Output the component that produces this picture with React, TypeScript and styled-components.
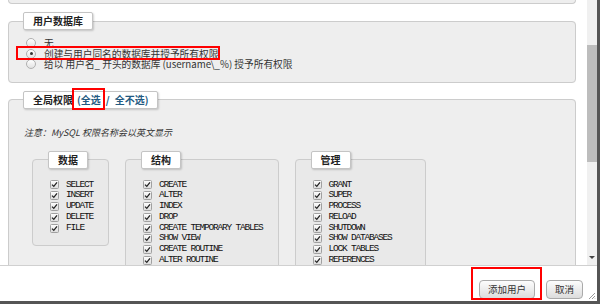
import React from 'react';
import styled, { createGlobalStyle } from 'styled-components';

const GlobalStyle = createGlobalStyle`
    html, body {
        margin: 0;
        padding: 0;
        background: #fff;
    }
    body {
        font-family: "Noto Sans CJK SC", "Liberation Sans", sans-serif;
    }
`;

const Window = styled.div`
    position: relative;
    width: 600px;
    height: 304px;
    box-sizing: border-box;
    border-right: 3px solid #555;
    border-bottom: 3px solid #555;
    background: #fff;
    display: flex;
    flex-direction: column;
    overflow: hidden;
`;

const Body = styled.div`
    display: flex;
    height: 265px;
    flex-shrink: 0;
`;

const ScrollPane = styled.div`
    flex: 1;
    overflow: hidden;
    padding: 0 11px 0 8px;
`;

const PrevFieldset = styled.div`
    height: 3px;
    border: 1px solid #ccc;
    border-top: none;
    border-radius: 0 0 4px 4px;
    background: #eee;
`;

const Fieldset = styled.fieldset`
    margin: 8px 0 0;
    padding: 8px 12px 12px 17px;
    border: 1px solid #ccc;
    border-radius: 4px;
    background: #eee;
    min-width: 0;
`;

const Legend = styled.legend<{ $shift?: number }>`
    margin-left: ${p => p.$shift ?? -3}px;
    padding: 0 9px;
    line-height: 16px;
    font-size: 10px;
    font-weight: bold;
    color: #222;
    background: #fff;
    border: 1px solid #c4c4c4;
    border-radius: 2px;
    box-shadow: 1px 1px 2px rgba(0, 0, 0, 0.18);
    white-space: nowrap;
`;

const Link = styled.a<{ $gap?: number }>`
    margin-left: ${p => p.$gap ?? 0}px;
    color: #235a81;
    text-decoration: none;
`;

const RadioRow = styled.label`
    display: flex;
    align-items: center;
    gap: 8px;
    height: 10.5px;
    line-height: 10.5px;
    font-size: 9.7px;
    color: #333;
    white-space: nowrap;
`;

const Radio = styled.span<{ $checked?: boolean }>`
    position: relative;
    width: 8px;
    height: 8px;
    border: 1px solid #b0b0b0;
    border-radius: 50%;
    background: linear-gradient(#fff, #e2e2e2);
    flex-shrink: 0;

    &::after {
        content: '';
        display: ${p => (p.$checked ? 'block' : 'none')};
        position: absolute;
        left: 2.5px;
        top: 2.5px;
        width: 3px;
        height: 3px;
        border-radius: 50%;
        background: #333;
    }
`;

const Note = styled.div`
    margin: 10px 0 0 -2px;
    font-size: 9px;
    line-height: 12px;
    font-style: italic;
    color: #333;
`;

const Groups = styled.div`
    display: flex;
    align-items: flex-start;
    gap: 16px;
    margin-top: 12px;
    padding-left: 6px;
`;

const SubFieldset = styled(Fieldset)`
    margin: 0;
    padding: 11px 15px 12px 17px;
    background: #e9e9e9;
`;

const Item = styled.label`
    display: flex;
    align-items: center;
    gap: 7px;
    height: 10.8px;
    line-height: 10.8px;
    font-family: "Liberation Mono", monospace;
    font-size: 9.5px;
    letter-spacing: -1.2px;
    color: #111;
    white-space: nowrap;
`;

const Scrollbar = styled.div`
    width: 10px;
    background: #f0f0f0;
    display: flex;
    flex-direction: column;
    align-items: center;
`;

const Thumb = styled.div`
    margin-top: 45px;
    width: 10px;
    height: 117px;
    background: #bdbdbd;
`;

const ArrowDown = styled.div`
    margin-top: auto;
    margin-bottom: 6px;
    width: 0;
    height: 0;
    border-left: 3px solid transparent;
    border-right: 3px solid transparent;
    border-top: 3px solid #444;
`;

const ButtonPane = styled.div`
    position: relative;
    flex: 1;
    border-top: 1px solid #d0d0d0;
    display: flex;
    justify-content: flex-end;
    align-items: flex-start;
    gap: 11px;
    padding: 14px 14px 0 0;
`;

const Button = styled.button`
    height: 19px;
    padding: 0 8px;
    font-family: "Noto Sans CJK SC", sans-serif;
    font-size: 9.5px;
    line-height: 17px;
    color: #333;
    background: linear-gradient(#fdfdfd, #dcdcdc);
    border: 1px solid #aaa;
    border-radius: 4px;
`;

const Grip = styled.svg`
    position: absolute;
    right: 1px;
    bottom: 1px;
`;

const Mark = styled.div<{ $x: number; $y: number; $w: number; $h: number }>`
    position: absolute;
    left: ${p => p.$x}px;
    top: ${p => p.$y}px;
    width: ${p => p.$w}px;
    height: ${p => p.$h}px;
    box-sizing: border-box;
    border: 2px solid #f00;
    pointer-events: none;
`;

function CheckIcon() {
    return (
        <svg width="9" height="9" viewBox="0 0 9 9" style={{ flexShrink: 0 }}>
            <defs>
                <linearGradient id="cb" x1="0" y1="0" x2="0" y2="1">
                    <stop offset="0" stopColor="#fff" />
                    <stop offset="1" stopColor="#dcdcdc" />
                </linearGradient>
            </defs>
            <rect x="0.5" y="0.5" width="8" height="8" rx="1" fill="url(#cb)" stroke="#a0a0a0" />
            <path d="M2 4.6 L3.8 6.4 L7 2.4" fill="none" stroke="#222" strokeWidth="1.3" />
        </svg>
    );
}

const groups = [
    {
        title: '数据',
        items: ['SELECT', 'INSERT', 'UPDATE', 'DELETE', 'FILE'],
    },
    {
        title: '结构',
        items: [
            'CREATE', 'ALTER', 'INDEX', 'DROP', 'CREATE TEMPORARY TABLES', 'SHOW VIEW',
            'CREATE ROUTINE', 'ALTER ROUTINE', 'EXECUTE', 'CREATE VIEW', 'EVENT', 'TRIGGER',
        ],
    },
    {
        title: '管理',
        items: [
            'GRANT', 'SUPER', 'PROCESS', 'RELOAD', 'SHUTDOWN', 'SHOW DATABASES', 'LOCK TABLES',
            'REFERENCES', 'REPLICATION CLIENT', 'REPLICATION SLAVE', 'CREATE USER',
        ],
    },
];

export default function App() {
    return (
        <>
            <GlobalStyle />
            <Window>
                <Body>
                    <ScrollPane>
                        <PrevFieldset />

                        <Fieldset>
                            <Legend>用户数据库</Legend>
                            <RadioRow><Radio />无</RadioRow>
                            <RadioRow><Radio $checked />创建与用户同名的数据库并授予所有权限</RadioRow>
                            <RadioRow><Radio />给以 用户名_ 开头的数据库 (username\_%) 授予所有权限</RadioRow>
                        </Fieldset>

                        <Fieldset>
                            <Legend>
                                全局权限
                                <Link href="#" $gap={4}>(全选</Link>
                                <Link href="#" $gap={5}>/</Link>
                                <Link href="#" $gap={5}>全不选)</Link>
                            </Legend>
                            <Note>注意：MySQL 权限名称会以英文显示</Note>
                            <Groups>
                                {groups.map(group => (
                                    <SubFieldset key={group.title}>
                                        <Legend $shift={-2}>{group.title}</Legend>
                                        {group.items.map(item => (
                                            <Item key={item}>
                                                <CheckIcon />
                                                {item}
                                            </Item>
                                        ))}
                                    </SubFieldset>
                                ))}
                            </Groups>
                        </Fieldset>
                    </ScrollPane>
                    <Scrollbar>
                        <Thumb />
                        <ArrowDown />
                    </Scrollbar>
                </Body>

                <ButtonPane>
                    <Button>添加用户</Button>
                    <Button>取消</Button>
                    <Grip width="8" height="8" viewBox="0 0 8 8">
                        <path d="M7 1 L1 7 M7 4 L4 7 M7 6.5 L6.5 7" stroke="#999" strokeWidth="1" />
                    </Grip>
                </ButtonPane>

                <Mark $x={16} $y={46} $w={204} $h={14} />
                <Mark $x={72} $y={88} $w={33} $h={22} />
                <Mark $x={471} $y={267} $w={71} $h={33} />
            </Window>
        </>
    );
}
